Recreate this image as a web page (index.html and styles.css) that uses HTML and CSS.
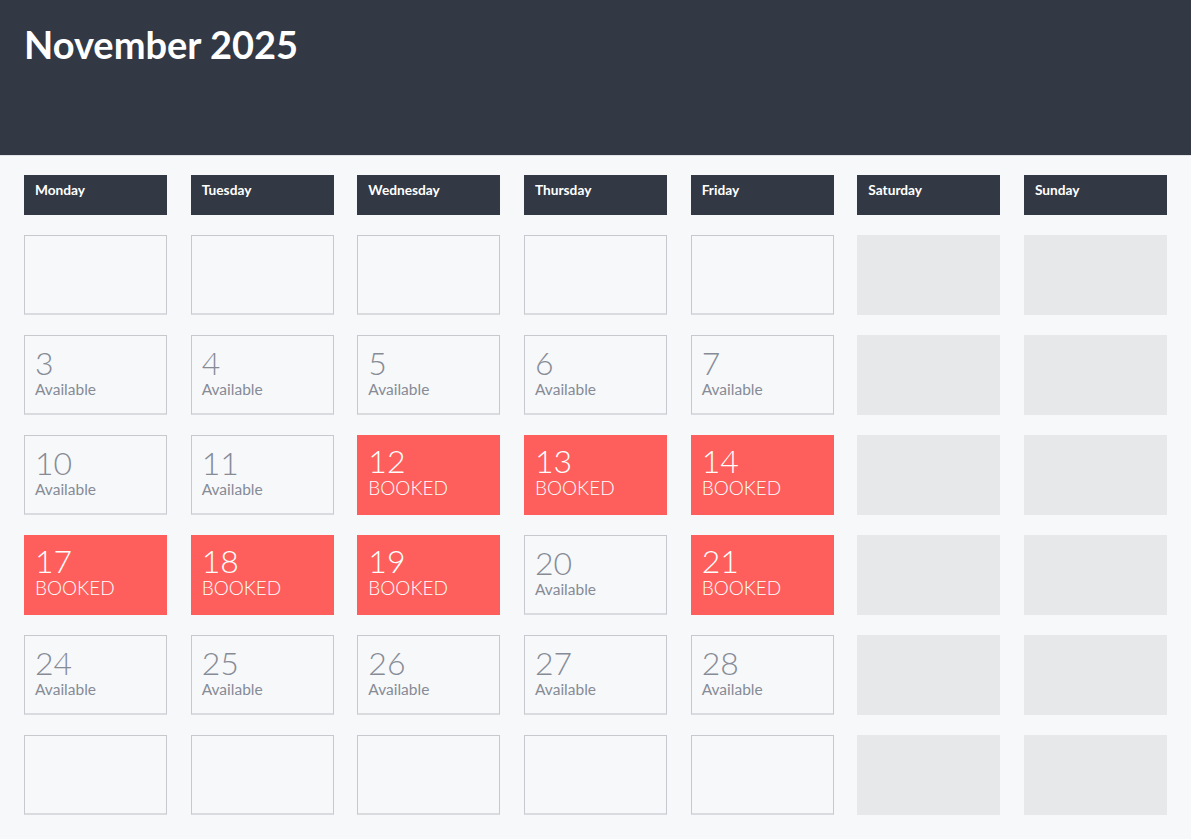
FILE: index.html
```html
<!DOCTYPE html>
<html lang="en">
<head>
<meta charset="utf-8">
<title>November 2025</title>
<link rel="stylesheet" href="styles.css">
</head>
<body>
<header class="top">
  <h1 class="title">November 2025</h1>
</header>
<main class="cal">
  <div class="dow">Monday</div>
  <div class="dow">Tuesday</div>
  <div class="dow">Wednesday</div>
  <div class="dow">Thursday</div>
  <div class="dow">Friday</div>
  <div class="dow">Saturday</div>
  <div class="dow">Sunday</div>

  <div class="cell"></div>
  <div class="cell"></div>
  <div class="cell"></div>
  <div class="cell"></div>
  <div class="cell"></div>
  <div class="cell we"></div>
  <div class="cell we"></div>

  <div class="cell"><span class="num">3</span><span class="st">Available</span></div>
  <div class="cell"><span class="num">4</span><span class="st">Available</span></div>
  <div class="cell"><span class="num">5</span><span class="st">Available</span></div>
  <div class="cell"><span class="num">6</span><span class="st">Available</span></div>
  <div class="cell"><span class="num">7</span><span class="st">Available</span></div>
  <div class="cell we"></div>
  <div class="cell we"></div>

  <div class="cell"><span class="num">10</span><span class="st">Available</span></div>
  <div class="cell"><span class="num">11</span><span class="st">Available</span></div>
  <div class="cell booked"><span class="num">12</span><span class="st">BOOKED</span></div>
  <div class="cell booked"><span class="num">13</span><span class="st">BOOKED</span></div>
  <div class="cell booked"><span class="num">14</span><span class="st">BOOKED</span></div>
  <div class="cell we"></div>
  <div class="cell we"></div>

  <div class="cell booked"><span class="num">17</span><span class="st">BOOKED</span></div>
  <div class="cell booked"><span class="num">18</span><span class="st">BOOKED</span></div>
  <div class="cell booked"><span class="num">19</span><span class="st">BOOKED</span></div>
  <div class="cell"><span class="num">20</span><span class="st">Available</span></div>
  <div class="cell booked"><span class="num">21</span><span class="st">BOOKED</span></div>
  <div class="cell we"></div>
  <div class="cell we"></div>

  <div class="cell"><span class="num">24</span><span class="st">Available</span></div>
  <div class="cell"><span class="num">25</span><span class="st">Available</span></div>
  <div class="cell"><span class="num">26</span><span class="st">Available</span></div>
  <div class="cell"><span class="num">27</span><span class="st">Available</span></div>
  <div class="cell"><span class="num">28</span><span class="st">Available</span></div>
  <div class="cell we"></div>
  <div class="cell we"></div>

  <div class="cell"></div>
  <div class="cell"></div>
  <div class="cell"></div>
  <div class="cell"></div>
  <div class="cell"></div>
  <div class="cell we"></div>
  <div class="cell we"></div>
</main>
</body>
</html>
```
FILE: styles.css
```css
* { box-sizing: border-box; }
html, body { margin: 0; padding: 0; }
body {
  background: #f7f8fa;
  font-family: Lato, "Open Sans", sans-serif;
  width: 1191px;
  height: 839px;
  overflow: hidden;
}
.top {
  background: #323844;
  height: 156px;
  padding: 20px 24px 0;
  border-bottom: 1px solid #e2e4e8;
}
.title {
  margin: 0;
  color: #ffffff;
  font-size: 38px;
  font-weight: 700;
  line-height: 48px;
  letter-spacing: 0;
}
.cal {
  display: grid;
  grid-template-columns: repeat(7, 1fr);
  column-gap: 23.67px;
  row-gap: 20px;
  padding: 19px 24px 0;
  grid-auto-rows: 80px;
  grid-template-rows: 40px;
}
.dow {
  background: #323844;
  color: #ffffff;
  font-size: 13.7px;
  font-weight: 700;
  padding: 7px 11px 0;
  line-height: 16px;
}
.cell {
  border: 1px solid #c6c9ce;
  border-bottom: 2px solid #d9dbdf;
  background: #f7f8fa;
  padding: 10px 10px 0;
  display: flex;
  flex-direction: column;
}
.cell.we {
  background: #e7e8ea;
  border: none;
}
.num {
  font-size: 32px;
  font-weight: 300;
  color: #868b96;
  line-height: 34px;
}
.st {
  font-size: 15.5px;
  font-weight: 400;
  color: #868b96;
  line-height: 18px;
}
.cell.booked {
  background: #fe5f5c;
  border: none;
  padding: 9px 11px 0;
}
.cell.booked .num { color: #ffffff; }
.cell.booked .st {
  color: #ffffff;
  font-size: 19px;
  font-weight: 300;
  line-height: 20px;
}
```
